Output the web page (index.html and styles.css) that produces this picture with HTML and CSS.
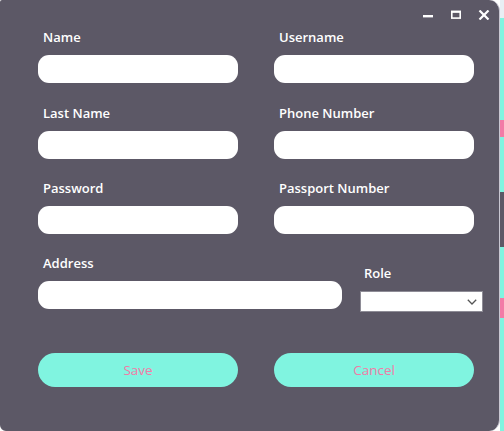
FILE: index.html
```html
<!DOCTYPE html>
<html lang="en">
<head>
    <meta charset="UTF-8">
    <meta name="viewport" content="width=device-width, initial-scale=1.0">
    <title>Add User</title>
    <link rel="stylesheet" href="styles.css">
</head>
<body>
    <div class="window">
        <div class="titlebar">
            <svg class="ctl" width="12" height="10" viewBox="0 0 12 10"><rect x="1" y="5" width="10" height="2.4" fill="#fff"/></svg>
            <svg class="ctl" width="12" height="10" viewBox="0 0 12 10"><rect x="1.8" y="1.5" width="8.4" height="6.6" fill="none" stroke="#fff" stroke-width="1.6"/><rect x="1" y="0.8" width="10" height="2" fill="#fff"/></svg>
            <svg class="ctl" width="12" height="10" viewBox="0 0 12 10"><path d="M1.5 0.5 L10.5 9.5 M10.5 0.5 L1.5 9.5" stroke="#fff" stroke-width="2.2"/></svg>
        </div>

        <form class="user-form">
            <div class="grid">
                <div class="field"><label>Name</label><input type="text"></div>
                <div class="field"><label>Username</label><input type="text"></div>
                <div class="field"><label>Last Name</label><input type="text"></div>
                <div class="field"><label>Phone Number</label><input type="text"></div>
                <div class="field"><label>Password</label><input type="password"></div>
                <div class="field"><label>Passport Number</label><input type="text"></div>
            </div>

            <div class="row">
                <div class="field address"><label>Address</label><input type="text"></div>
                <div class="field role">
                    <label>Role</label>
                    <div class="select">
                        <svg width="10" height="6" viewBox="0 0 10 6"><path d="M0.8 0.8 L5 5 L9.2 0.8" fill="none" stroke="#555" stroke-width="1.3"/></svg>
                    </div>
                </div>
            </div>

            <div class="buttons">
                <button type="submit">Save</button>
                <button type="button">Cancel</button>
            </div>
        </form>
    </div>
    <div class="behind">
        <span class="s-light"></span>
        <span class="s-teal"></span>
        <span class="s-pink"></span>
        <span class="s-teal h55"></span>
        <span class="s-dark"></span>
        <span class="s-teal h51"></span>
        <span class="s-pink h20"></span>
        <span class="s-teal grow"></span>
    </div>
</body>
</html>
```

FILE: styles.css
```css
body { margin: 0; background: #fff; display: flex; height: 431px; overflow: hidden; font-family: "Open Sans", "Noto Sans", sans-serif; }

.window { width: 500px; height: 431px; background: #5c5866; border-radius: 2px 11px 11px 6px; border-right: 1px solid #c9c7d2; box-sizing: border-box; }
.titlebar { height: 28px; display: flex; justify-content: flex-end; align-items: flex-start; gap: 16px; padding: 10px 9px 0 0; box-sizing: border-box; }
.ctl { display: block; }

.user-form { padding-left: 38px; }
.grid { display: grid; grid-template-columns: 200px 200px; column-gap: 36px; row-gap: 20.5px; }
.field { display: flex; flex-direction: column; }
.field label { color: #fff; font-size: 13px; font-weight: 600; line-height: 18px; margin: 0 0 9px 5px; }
.field input { height: 28px; border: none; border-radius: 11px; background: #fff; padding: 0 10px; box-sizing: border-box; outline: none; }

.row { display: flex; gap: 18px; margin-top: 20px; }
.address { width: 304px; }
.role { width: 123px; margin-top: 10px; }
.role label { margin: 0 0 9px 4px; }
.select { height: 21px; background: #fff; border: 1px solid #8e8c96; box-sizing: border-box; display: flex; justify-content: flex-end; align-items: center; padding-right: 5px; }
.select svg { display: block; }

.buttons { display: flex; gap: 36px; margin-top: 41px; }
.buttons button { width: 200px; height: 34px; border: none; border-radius: 17px; background: #80f4e0; color: #f27ba6; font-family: "Open Sans", "Noto Sans", sans-serif; font-size: 13.5px; cursor: pointer; }

.behind { flex: 1; display: flex; flex-direction: column; }
.behind span { display: block; }
.s-light { height: 18px; background: #e8eef4; }
.s-teal { height: 102px; background: #80f4e0; }
.s-pink { height: 17px; background: #f27ba6; }
.s-dark { height: 55px; background: #5c5866; }
.h55 { height: 55px; }
.h51 { height: 51px; }
.h20 { height: 20px; }
.grow { flex: 1; }
```
